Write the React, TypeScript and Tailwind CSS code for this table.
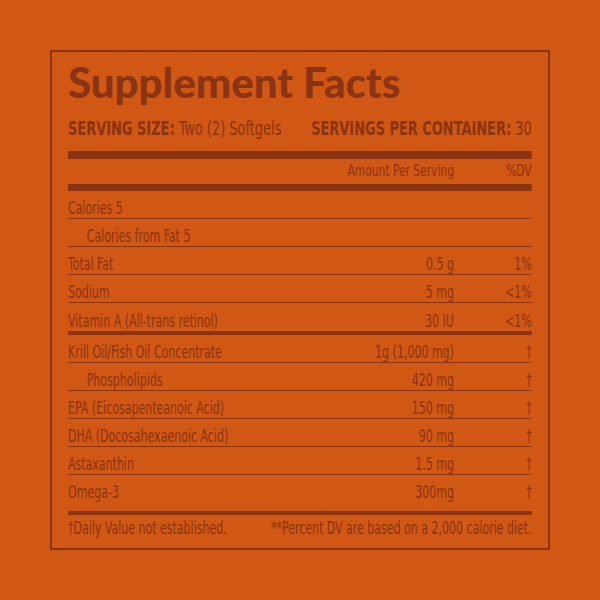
import { FC } from 'react';

type Row = {
  label: string;
  amount?: string;
  dv?: string;
  indent?: boolean;
};

const topRows: Row[] = [
  { label: 'Calories 5' },
  { label: 'Calories from Fat 5', indent: true },
  { label: 'Total Fat', amount: '0.5 g', dv: '1%' },
  { label: 'Sodium', amount: '5 mg', dv: '<1%' },
  { label: 'Vitamin A (All-trans retinol)', amount: '30 IU', dv: '<1%' },
];

const bottomRows: Row[] = [
  { label: 'Krill Oil/Fish Oil Concentrate', amount: '1g (1,000 mg)', dv: '†' },
  { label: 'Phospholipids', amount: '420 mg', dv: '†', indent: true },
  { label: 'EPA (Eicosapenteanoic Acid)', amount: '150 mg', dv: '†' },
  { label: 'DHA (Docosahexaenoic Acid)', amount: '90 mg', dv: '†' },
  { label: 'Astaxanthin', amount: '1.5 mg', dv: '†' },
];

// the label face is a tall condensed one, so the whole table is drawn wide and squeezed to 72%
const FactRow: FC<{ row: Row; last?: boolean; tall?: boolean }> = ({ row, last, tall }) => (
  <div
    className={`flex items-end ${tall ? 'h-[36px] pb-[9px]' : 'h-[28px] pb-0'} ${
      last ? '' : 'border-b border-[#8a3413]'
    }`}
  >
    <span className={`flex-1 ${row.indent ? 'pl-[26px]' : ''}`}>{row.label}</span>
    <span className="w-[170px] text-right">{row.amount}</span>
    <span className="w-[108px] text-right">{row.dv}</span>
  </div>
);

export default function App() {
  return (
    <div className="w-[600px] h-[600px] bg-[#d15714] p-[50px] text-[#8a3413] font-['DejaVu_Sans_Condensed','Liberation_Sans',sans-serif]">
      <div className="h-[500px] border-2 border-[#8a3413] px-[16px] pt-[6px]">
        <h1 className="font-['Lato',sans-serif] font-black text-[42px] leading-[48px]">Supplement Facts</h1>
        <div className="w-[644px] origin-left scale-x-[0.72]">
          <div className="mt-[11px] flex justify-between text-[20px] leading-[22px]">
            <span>
              <b>SERVING SIZE:</b> Two (2) Softgels
            </span>
            <span>
              <b>SERVINGS PER CONTAINER:</b> 30
            </span>
          </div>
          <div className="mt-[12px] h-[8px] bg-[#8a3413]" />
          <div className="flex h-[25px] items-center text-[16.5px]">
            <span className="flex-1" />
            <span className="text-right">Amount Per Serving</span>
            <span className="w-[108px] text-right">%DV</span>
          </div>
          <div className="h-[7px] bg-[#8a3413]" />
          <div className="text-[17px] leading-[20px]">
            {topRows.map((r, i) => (
              <FactRow key={r.label} row={r} last={i === topRows.length - 1} />
            ))}
            <div className="h-[4px] bg-[#8a3413]" />
            {bottomRows.map((r) => (
              <FactRow key={r.label} row={r} />
            ))}
            <FactRow row={{ label: 'Omega-3', amount: '300mg', dv: '†' }} last tall />
            <div className="h-[4px] bg-[#8a3413]" />
          </div>
          <div className="mt-[3px] flex justify-between text-[17px] leading-[20px]">
            <span>†Daily Value not established.</span>
            <span>**Percent DV are based on a 2,000 calorie diet.</span>
          </div>
        </div>
      </div>
    </div>
  );
}
